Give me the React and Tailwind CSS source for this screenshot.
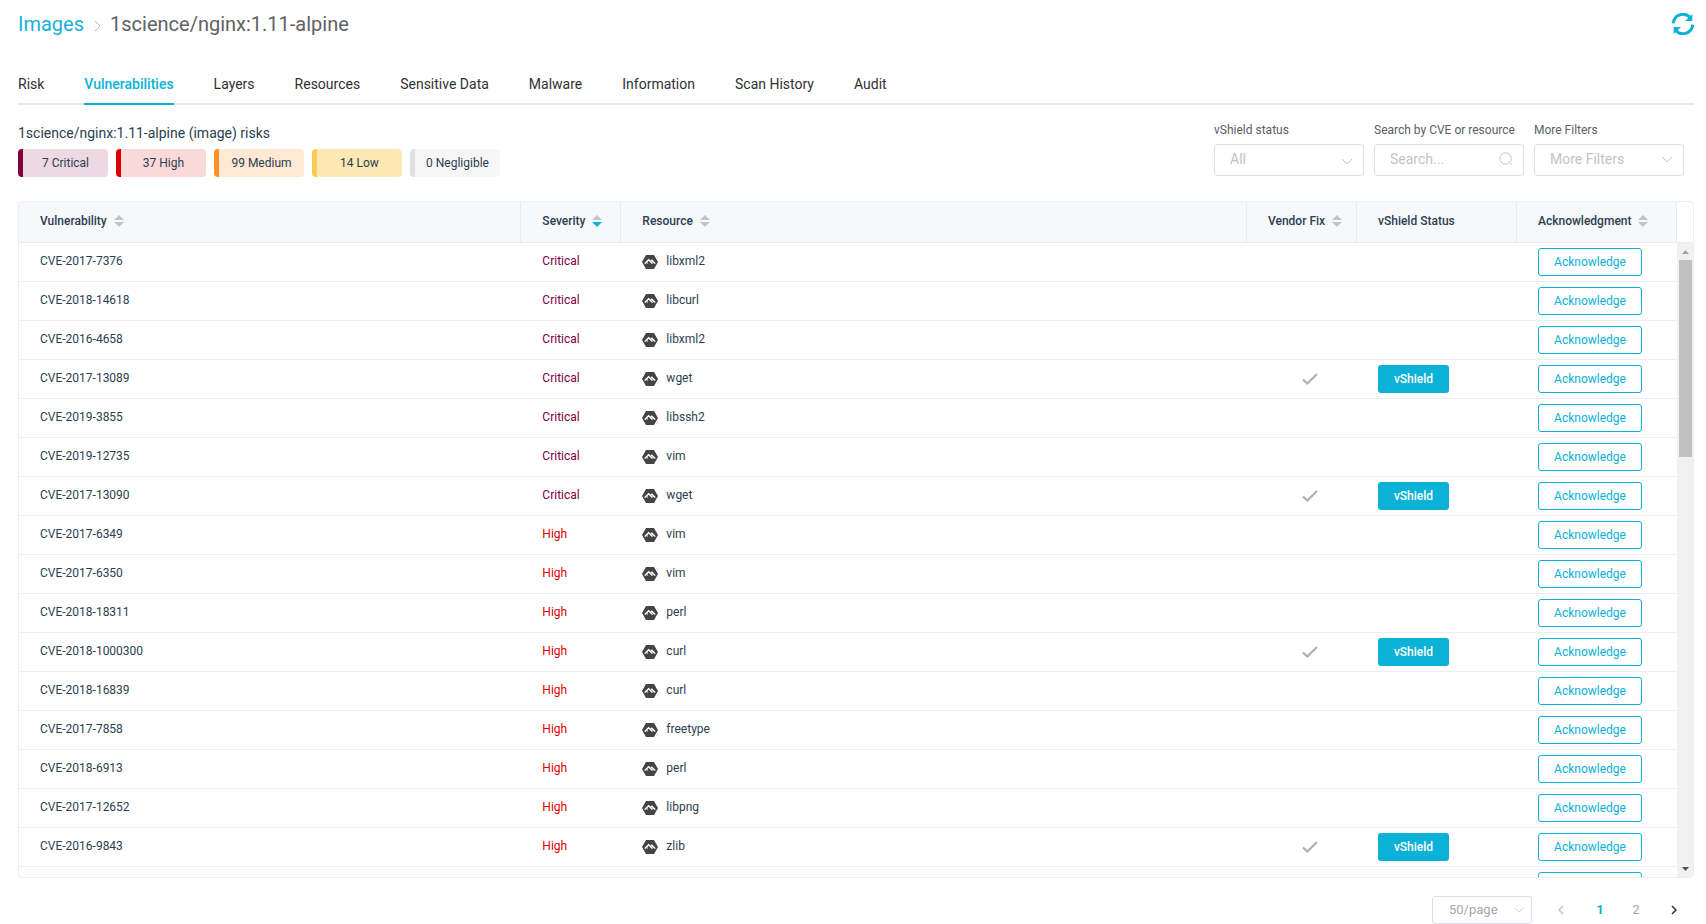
import React from "react";
import { SiAlpinelinux } from "react-icons/si";

const tabs = [
  "Risk",
  "Vulnerabilities",
  "Layers",
  "Resources",
  "Sensitive Data",
  "Malware",
  "Information",
  "Scan History",
  "Audit",
];

const risks = [
  { label: "7 Critical", style: "border-[#80003f] bg-[#ecd9e2]" },
  { label: "37 High", style: "border-[#dc0000] bg-[#fad9d9]" },
  { label: "99 Medium", style: "border-[#ff9123] bg-[#ffe8d4]" },
  { label: "14 Low", style: "border-[#f9cd54] bg-[#fce8b3]" },
  { label: "0 Negligible", style: "border-[#e0e0e0] bg-[#f6f6f6]" },
];

const rows = [
  ["CVE-2017-7376", "Critical", "libxml2", false],
  ["CVE-2018-14618", "Critical", "libcurl", false],
  ["CVE-2016-4658", "Critical", "libxml2", false],
  ["CVE-2017-13089", "Critical", "wget", true],
  ["CVE-2019-3855", "Critical", "libssh2", false],
  ["CVE-2019-12735", "Critical", "vim", false],
  ["CVE-2017-13090", "Critical", "wget", true],
  ["CVE-2017-6349", "High", "vim", false],
  ["CVE-2017-6350", "High", "vim", false],
  ["CVE-2018-18311", "High", "perl", false],
  ["CVE-2018-1000300", "High", "curl", true],
  ["CVE-2018-16839", "High", "curl", false],
  ["CVE-2017-7858", "High", "freetype", false],
  ["CVE-2018-6913", "High", "perl", false],
  ["CVE-2017-12652", "High", "libpng", false],
  ["CVE-2016-9843", "High", "zlib", true],
  ["CVE-2016-9841", "High", "zlib", false],
];

const columns = [
  { label: "Vulnerability", width: "w-[30.3%]", sort: "none" },
  { label: "Severity", width: "w-[100px]", sort: "desc" },
  { label: "Resource", width: "", sort: "none" },
  { label: "Vendor Fix", width: "w-[110px]", sort: "none" },
  { label: "vShield Status", width: "w-[160px]", sort: null },
  { label: "Acknowledgment", width: "w-[160px]", sort: "none" },
];

function Refresh() {
  return (
    <svg viewBox="0 0 66 66" className="size-[22px]" fill="none" aria-hidden="true">
      <g stroke="#0bb1d7" strokeWidth="9">
        <path d="M4 31A29 29 0 0 1 54 13" />
        <path d="M62 35A29 29 0 0 1 12 53" />
      </g>
      <path d="M61 3V24H39ZM5 63V42H27Z" fill="#0bb1d7" />
    </svg>
  );
}

function SortIcon({ direction }) {
  return (
    <svg viewBox="0 0 10 12" className="h-3 w-[10px] shrink-0" aria-hidden="true">
      <path d="M0 5L5 0L10 5Z" fill="#c0c4cc" />
      <path d="M0 7H10L5 12Z" fill={direction === "desc" ? "#0bb1d7" : "#c0c4cc"} />
    </svg>
  );
}

function Chevron({ className, points = "1,1 6,6 11,1", box = "0 0 12 7" }) {
  return (
    <svg viewBox={box} className={className} fill="none" stroke="currentColor" aria-hidden="true">
      <polyline points={points} />
    </svg>
  );
}

function Filter({ id, label, children }) {
  return (
    <div className="flex w-[150px] flex-col gap-[5px]">
      <label htmlFor={id} className="text-[12px] leading-[18px] whitespace-nowrap text-[#5a5e66]">
        {label}
      </label>
      <div className="relative">{children}</div>
    </div>
  );
}

const field =
  "block h-8 w-full appearance-none rounded border border-[#dcdfe6] bg-white pl-[15px] pr-8 pb-0.5 text-[14px] leading-5 text-[#c0c4cc] outline-none placeholder:text-[#c0c4cc]";

export default function App() {
  return (
    <div className="flex h-screen flex-col bg-white pr-3 pl-[18px] font-['Roboto',sans-serif] text-[12px] text-[#2c3e50]">
      <header className="flex h-12 shrink-0 items-center justify-between">
        <nav aria-label="Breadcrumb" className="flex items-center text-[20px] leading-6">
          <a href="#images" className="text-[#19b1d8]">
            Images
          </a>
          <Chevron
            className="mt-1 mr-[9px] ml-[10px] h-3 w-[7px] text-[#b4b8c0]"
            box="0 0 7 12"
            points="1,1 6,6 1,11"
          />
          <h1 className="text-[#606266]">1science/nginx:1.11-alpine</h1>
        </nav>
        <button type="button" aria-label="Refresh">
          <Refresh />
        </button>
      </header>

      <nav aria-label="Sections" className="mt-4 flex h-[41px] shrink-0 gap-10 border-b-2 border-[#e4e7ed] text-[14px]">
        {tabs.map((tab) => (
          <a
            key={tab}
            href={"#" + tab.toLowerCase().replace(" ", "-")}
            className={
              tab === "Vulnerabilities"
                ? "-mb-0.5 border-b-2 border-[#0bb1d7] leading-10 font-medium text-[#0bb1d7]"
                : "leading-10 text-[#303133]"
            }
          >
            {tab}
          </a>
        ))}
      </nav>

      <section className="mt-4 flex shrink-0 items-start justify-between">
        <div>
          <h2 className="text-[14px] leading-6">1science/nginx:1.11-alpine (image) risks</h2>
          <ul className="mt-1 flex gap-2">
            {risks.map((risk) => (
              <li
                key={risk.label}
                className={"h-7 w-[90px] rounded border-l-[5px] text-center text-[12px] leading-7 " + risk.style}
              >
                {risk.label}
              </li>
            ))}
          </ul>
        </div>
        <div className="flex gap-[10px] pr-[10px]">
          <Filter id="vshield" label="vShield status">
            <select id="vshield" className={field}>
              <option>All</option>
            </select>
            <Chevron className="pointer-events-none absolute top-[14px] right-[11px] h-[7px] w-3 text-[#c0c4cc]" />
          </Filter>
          <Filter id="search" label="Search by CVE or resource">
            <input id="search" type="text" placeholder="Search..." className={field} />
            <svg
              viewBox="0 0 14 14"
              className="pointer-events-none absolute top-2 right-[11px] size-[14px]"
              fill="none"
              stroke="#c0c4cc"
              aria-hidden="true"
            >
              <circle cx="6.5" cy="6.5" r="5.7" />
              <path d="M10.5 10.5L13 13" />
            </svg>
          </Filter>
          <Filter id="more" label="More Filters">
            <select id="more" className={field}>
              <option>More Filters</option>
            </select>
            <Chevron className="pointer-events-none absolute top-3 right-[11px] h-[7px] w-3 text-[#c0c4cc]" />
          </Filter>
        </div>
      </section>

      <main className="mt-6 flex min-h-0 flex-1 overflow-hidden rounded border border-[#ebeef5]">
        <div className="min-w-0 flex-1 overflow-y-auto [scrollbar-width:none]">
          <table className="w-full table-fixed border-separate border-spacing-0">
            <thead>
              <tr>
                {columns.map((col) => (
                  <th
                    key={col.label}
                    scope="col"
                    className={
                      "sticky top-0 h-[41px] border-r border-b border-[#e6ebf5] bg-[#f7f8fa] p-0 pb-0.5 pl-[21px] text-left font-medium whitespace-nowrap text-[#2c3e50] " +
                      col.width
                    }
                  >
                    {col.sort ? (
                      <button type="button" className="flex items-center gap-[7px]">
                        {col.label}
                        <SortIcon direction={col.sort} />
                      </button>
                    ) : (
                      col.label
                    )}
                  </th>
                ))}
              </tr>
            </thead>
            <tbody>
              {rows.map(([cve, severity, resource, fix]) => (
                <tr key={cve} className="h-[39px] [&>td]:h-[39px] [&>td]:border-b [&>td]:border-[#ebeef5] [&>td]:p-0 [&>td]:pl-[21px]">
                  <td>
                    <div className="pb-[3px]">{cve}</div>
                  </td>
                  <td className={severity === "Critical" ? "text-[#80003f]" : "text-[#dc0000]"}>
                    <div className="pb-[3px]">{severity}</div>
                  </td>
                  <td>
                    <div className="flex items-center gap-2">
                      <SiAlpinelinux className="size-4 text-[#444444]" aria-hidden="true" />
                      <span className="pb-[3px]">{resource}</span>
                    </div>
                  </td>
                  <td>
                    {fix && (
                      <svg viewBox="0 0 16 12" className="ml-[34px] h-3 w-4" fill="none" aria-label="Fix available">
                        <path d="M1 6.5L5.3 10.5L15 1" stroke="#b0b0b0" strokeWidth="2.2" />
                      </svg>
                    )}
                  </td>
                  <td>
                    {fix && (
                      <button type="button" className="block h-7 w-[71px] rounded-[3px] bg-[#0bb1d7] font-medium text-white">
                        vShield
                      </button>
                    )}
                  </td>
                  <td>
                    <button type="button" className="block h-7 w-[104px] rounded-[3px] border border-[#0bb1d7] bg-white text-[#0bb1d7]">
                      Acknowledge
                    </button>
                  </td>
                </tr>
              ))}
            </tbody>
          </table>
        </div>
        <div aria-hidden="true" className="flex w-4 flex-col">
          <div className="h-[41px] border-b border-[#ebeef5]" />
          <div className="flex flex-1 flex-col items-center bg-[#f1f1f1]">
            <svg viewBox="0 0 17 17" className="size-[17px]">
              <path d="M5 11L8.500 7L12 11Z" fill="#a3a3a3" />
            </svg>
            <div className="ml-px h-[197px] w-[13px] bg-[#c1c1c1]" />
            <svg viewBox="0 0 17 17" className="mt-auto size-[17px]">
              <path d="M5 7L8.500 11L12 7Z" fill="#505050" />
            </svg>
          </div>
        </div>
      </main>

      <footer className="mt-[18px] flex h-7 shrink-0 items-center justify-end gap-2 text-[13px] text-[#a5a8ad]">
        <div className="relative w-[100px]">
          <select
            aria-label="Rows per page"
            className="block h-7 w-full appearance-none rounded-[3px] border border-[#dcdfe6] bg-white pl-4 text-[13px] outline-none"
          >
            <option>50/page</option>
          </select>
          <Chevron className="pointer-events-none absolute top-[11px] right-2 h-[6px] w-[10px] text-[#c0c4cc]" />
        </div>
        <div className="flex">
          <button type="button" aria-label="Previous page" className="flex w-[42px] items-center justify-center text-[#c0c4cc]">
            <Chevron className="h-[10px] w-[6px] stroke-[1.5]" box="0 0 6 10" points="5,1 1,5 5,9" />
          </button>
          <button type="button" className="w-9 font-bold text-[#0bb1d7]">
            1
          </button>
          <button type="button" className="w-9">
            2
          </button>
          <button type="button" aria-label="Next page" className="flex w-10 items-center justify-center text-[#303133]">
            <Chevron className="h-[10px] w-[6px] stroke-[1.5]" box="0 0 6 10" points="1,1 5,5 1,9" />
          </button>
        </div>
      </footer>
    </div>
  );
}
